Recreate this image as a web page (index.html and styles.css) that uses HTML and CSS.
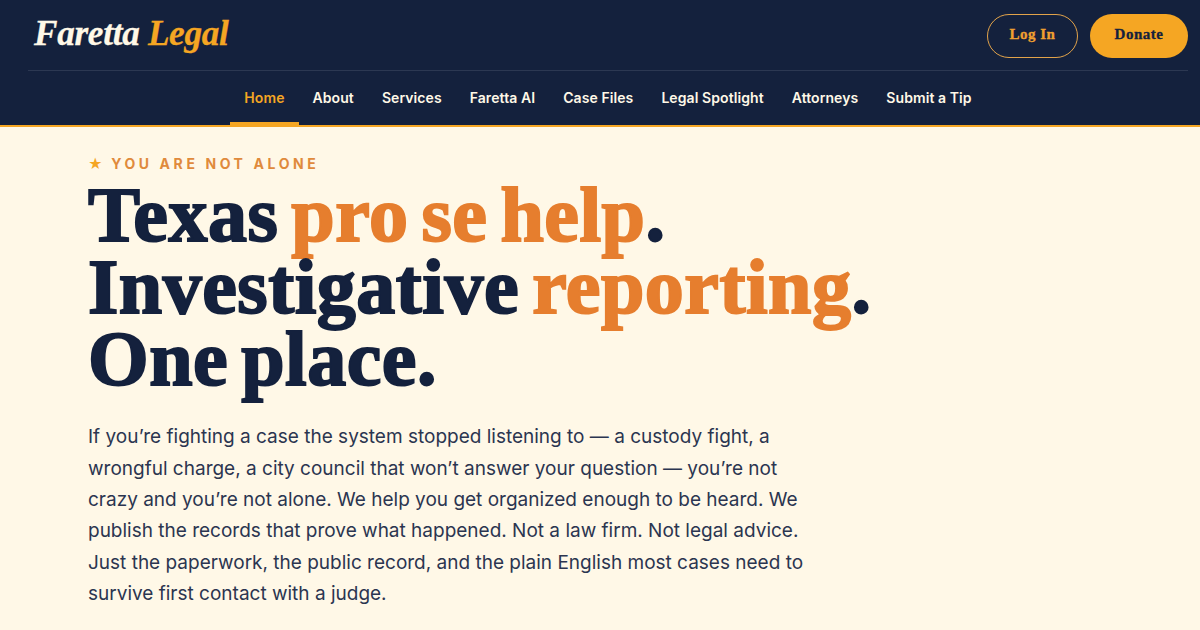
FILE: index.html
```html
<!DOCTYPE html>
<html lang="en">
<head>
<meta charset="utf-8">
<title>Faretta Legal</title>
<link rel="stylesheet" href="styles.css">
</head>
<body>
<header class="site-header">
  <div class="top-row">
    <a class="logo" href="#">Faretta <span class="accent">Legal</span></a>
    <div class="actions">
      <a class="btn btn-outline" href="#">Log In</a>
      <a class="btn btn-solid" href="#">Donate</a>
    </div>
  </div>
  <nav class="nav">
    <a class="nav-link active" href="#">Home</a>
    <a class="nav-link" href="#">About</a>
    <a class="nav-link" href="#">Services</a>
    <a class="nav-link" href="#">Faretta AI</a>
    <a class="nav-link" href="#">Case Files</a>
    <a class="nav-link" href="#">Legal Spotlight</a>
    <a class="nav-link" href="#">Attorneys</a>
    <a class="nav-link" href="#">Submit a Tip</a>
  </nav>
</header>
<main class="hero">
  <p class="eyebrow"><span class="star">★</span> YOU ARE NOT ALONE</p>
  <h1 class="headline">Texas <span class="hl">pro se help</span>.<br>Investigative <span class="hl">reporting</span>.<br>One place.</h1>
  <p class="lede">If you’re fighting a case the system stopped listening to — a custody fight, a wrongful charge, a city council that won’t answer your question — you’re not crazy and you’re not alone. We help you get organized enough to be heard. We publish the records that prove what happened. Not a law firm. Not legal advice. Just the paperwork, the public record, and the plain English most cases need to survive first contact with a judge.</p>
</main>
</body>
</html>
```
FILE: styles.css
```css
* { box-sizing: border-box; }
html, body { margin: 0; height: 630px; overflow: hidden; }
body { background: #fff8e7; font-family: Inter, sans-serif; color: #14213d; }
a { text-decoration: none; color: inherit; }
.site-header { background: #14213d; height: 127px; border-bottom: 2px solid #f5a623; padding: 0 12px 0 28px; }
.top-row { display: flex; justify-content: space-between; align-items: center; height: 71px; border-bottom: 1px solid #2c3852; padding: 2px 0 0 6px; }
.logo { margin-bottom: 4px; font-family: "Liberation Serif", serif; font-style: italic; font-weight: 700; font-size: 35.2px; color: #fff8e7; letter-spacing: -0.3px; -webkit-text-stroke: 0.3px currentColor; }
.accent { color: #f5a623; }
.actions { display: flex; gap: 12px; }
.btn { display: flex; align-items: center; justify-content: center; height: 44px; border-radius: 22px; font-family: "Liberation Serif", serif; font-weight: 700; font-size: 15px; letter-spacing: 0.5px; padding-bottom: 3px; -webkit-text-stroke: 0.3px currentColor; }
.btn-outline { width: 91px; border: 1.5px solid #e2a34a; color: #f0a030; }
.btn-solid { width: 98px; background: #f5a623; color: #14213d; }
.nav { display: flex; justify-content: center; height: 54px; }
.nav-link { display: flex; align-items: center; padding: 2px 14px 0; font-size: 14px; font-weight: 600; letter-spacing: 0.08px; color: #fff8e7; border-bottom: 3px solid transparent; }
.nav-link.active { color: #f5a623; border-bottom-color: #f5a623; }
.hero { padding: 28px 88px 0; }
.eyebrow { margin: 0; font-size: 14px; font-weight: 700; letter-spacing: 3.6px; color: #e08a3c; line-height: 17px; }
.star { color: #f5a623; margin-right: -2px; }
.headline { margin: 7px 0 0; font-family: "Liberation Serif", serif; font-weight: 700; font-size: 78px; line-height: 72px; letter-spacing: 0.5px; word-spacing: -7px; -webkit-text-stroke: 2px currentColor; }
.hl { color: #e67e2e; }
.lede { margin: 26.3px 0 0; width: 724px; font-size: 19px; line-height: 31.35px; color: #2b3550; }
```
